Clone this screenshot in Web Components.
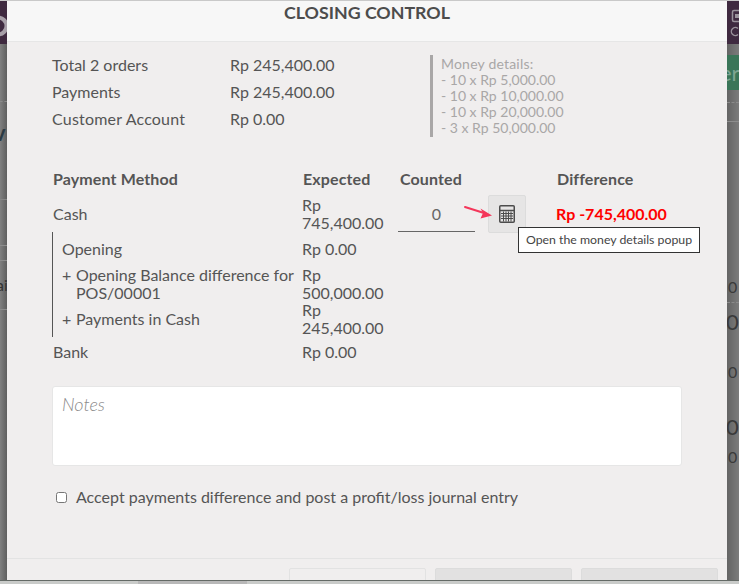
<!DOCTYPE html>
<html>
<head>
<meta charset="utf-8">
<title>Closing control</title>
<style>
    html, body { margin: 0; padding: 0; height: 584px; overflow: hidden; }
    body { font-family: "Lato", "Liberation Sans", sans-serif; font-size: 16px; color: #555; }
</style>
</head>
<body>
<pos-screen>
    <closing-modal title-text="CLOSING CONTROL">
        <div style="display:flex">
            <div>
                <summary-row amount="Rp 245,400.00">Total 2 orders</summary-row>
                <summary-row amount="Rp 245,400.00">Payments</summary-row>
                <summary-row amount="Rp 0.00"><span style="letter-spacing:.2px">Customer Account</span></summary-row>
            </div>
            <money-details>
                <div style="letter-spacing:.2px">Money details:</div>
                <div>- 10 x Rp 5,000.00</div>
                <div>- 10 x Rp 10,000.00</div>
                <div>- 10 x Rp 20,000.00</div>
                <div>- 3 x Rp 50,000.00</div>
            </money-details>
        </div>
        <payment-table>
            <payment-row kind="head" expected="Expected" counted="Counted" difference="Difference">Payment Method</payment-row>
            <payment-row expected="Rp 745,400.00" difference="Rp -745,400.00">Cash
                <counted-input slot="counted"></counted-input>
            </payment-row>
            <payment-group>
                <payment-row kind="sub" expected="Rp 0.00">Opening</payment-row>
                <payment-row kind="sub" sign="+" expected="Rp 500,000.00">Opening Balance difference for POS/00001</payment-row>
                <payment-row kind="sub" sign="+" expected="Rp 245,400.00" style="margin-top:-1px">Payments in Cash</payment-row>
            </payment-group>
            <payment-row kind="last" expected="Rp 0.00">Bank</payment-row>
        </payment-table>
        <notes-box placeholder="Notes"></notes-box>
        <accept-check>Accept payments difference and post a profit/loss journal entry</accept-check>
    </closing-modal>
</pos-screen>

<script>
class posScreen extends HTMLElement {
    constructor() {
        super();
        this.attachShadow({mode: "open"});
        this.shadowRoot.innerHTML = `
            <style>
                :host { display: flex; flex-direction: column; width: 739px; height: 584px; overflow: hidden; background: #737373; }
                .top { height: 1px; background: #c9c9c9; }
                .middle { display: flex; height: 579px; }
                .bottom { height: 4px; border-top: 1px solid #646a66; box-sizing: border-box; background: #c9cbc9; padding-left: 138px; }
                .bottom div { width: 109px; height: 3px; background: #b8b8b8; }
                .side { overflow: hidden; font-size: 16px; color: #2f2f2f; line-height: 18px; }
                .left { width: 7px; background: linear-gradient(to right, #808080, #5f5f5f); }
                .right { width: 12px; background: linear-gradient(to left, #7c7c7c, #646464); }
                .band { height: 43px; background: #3f2a40; }
                .band svg { display: block; }
                .dash { height: 0; border-top: 1px dashed #8b8b8b; }
                .line { height: 1px; background: #8d8d8d; }
                .clip { white-space: nowrap; }
                .green { height: 35px; background: #3a7558; color: #7fa592; font-size: 22px; line-height: 35px; margin-top: 11px; text-indent: -7px; white-space: nowrap; }
                .big { font-size: 22px; line-height: 24px; margin-left: -1px; color: #3a3a3a; }
                .small { margin-left: 1px; color: #3a3a3a; }
            </style>
            <div class="top"></div>
            <div class="middle">
                <div class="side left">
                    <div class="band">
                        <svg width="7" height="43"><circle cx="-2" cy="25" r="8.500" fill="none" stroke="#a79fa8" stroke-width="4"/></svg>
                    </div>
                    <div class="dash" style="margin-top:57px"></div>
                    <div class="clip" style="margin-top:20px;margin-left:-6px;font-size:22px;line-height:22px;font-weight:700;color:#2a3a44">v</div>
                    <div class="line" style="margin-top:55px;background:#868686"></div>
                    <div class="line" style="margin-top:45px"></div>
                    <div class="line" style="margin-top:14px"></div>
                    <div class="clip" style="margin-top:15px;margin-left:-4px;color:#333">ai</div>
                    <div class="line" style="margin-top:15px"></div>
                </div>
                <slot></slot>
                <div class="side right">
                    <div class="band">
                        <svg width="12" height="43">
                            <rect x="5.500" y="9.500" width="10" height="11" rx="1.500" fill="none" stroke="#9b939c" stroke-width="1.500"/>
                            <rect x="8" y="13" width="6" height="4" fill="#9b939c"/>
                            <path d="M11 27.500a4 4 0 1 0 0 6" fill="none" stroke="#9b939c" stroke-width="1.400"/>
                        </svg>
                    </div>
                    <div class="green">er</div>
                    <div class="dash" style="margin-top:12px"></div>
                    <div class="line" style="margin-top:18px"></div>
                    <div class="small" style="margin-top:156px">0</div>
                    <div class="dash" style="margin-top:6px"></div>
                    <div class="big" style="margin-top:7px">0</div>
                    <div class="small" style="margin-top:29px">0</div>
                    <div class="big" style="margin-top:34px">0</div>
                    <div class="small" style="margin-top:9px">0</div>
                </div>
            </div>
            <div class="bottom"><div></div></div>
        `
    }
}

class closingModal extends HTMLElement {
    constructor() {
        super();
        this.attachShadow({mode: "open"});
        this.shadowRoot.innerHTML = `
            <style>
                :host { display: flex; flex-direction: column; width: 720px; height: 579px; background: #f0eeee; overflow: hidden; }
                header {
                    height: 40px;
                    flex: none;
                    background: #f7f7f7;
                    border-bottom: 1px solid #e6e6e6;
                    text-align: center;
                    font-size: 17.800px;
                    font-weight: 700;
                    line-height: 22px;
                    color: #4c4c4c;
                }
                .body { flex: 1; padding: 9px 45px 0 45px; }
                footer {
                    flex: none;
                    border-top: 1px solid #e3e3e3;
                    display: flex;
                    justify-content: flex-end;
                    gap: 9px;
                    padding: 9px 9px 0 0;
                    height: 12px;
                }
                button {
                    width: 137px;
                    height: 56px;
                    flex: none;
                    box-sizing: border-box;
                    border: 1px solid #dcdcdc;
                    border-radius: 2px;
                    background: #e2e1e1;
                }
                button.plain { background: #f0eeee; border-color: #e2e2e2; }
            </style>
            <header>${this.getAttribute("title-text")}</header>
            <div class="body"><slot></slot></div>
            <footer>
                <button class="plain"></button>
                <button></button>
                <button></button>
            </footer>
        `
    }
}

class summaryRow extends HTMLElement {
    constructor() {
        super();
        this.attachShadow({mode: "open"});
        this.shadowRoot.innerHTML = `
            <style>
                :host { display: grid; grid-template-columns: 178px 200px; height: 27px; line-height: 27px; color: #555; }
            </style>
            <div><slot></slot></div>
            <div>${this.getAttribute("amount")}</div>
        `
    }
}

class moneyDetails extends HTMLElement {
    constructor() {
        super();
        this.attachShadow({mode: "open"});
        this.shadowRoot.innerHTML = `
            <style>
                :host {
                    display: block;
                    margin: 4px 0 0 0;
                    border-left: 3px solid #a9a7a7;
                    padding: 1px 0 1px 8px;
                    height: 80px;
                    line-height: 16px;
                    font-size: 14px;
                    color: #a9a7a7;
                }
            </style>
            <slot></slot>
        `
    }
}

class paymentTable extends HTMLElement {
    constructor() {
        super();
        this.attachShadow({mode: "open"});
        this.shadowRoot.innerHTML = `
            <style>
                :host { display: block; margin-top: 33px; }
            </style>
            <slot></slot>
        `
    }
}

class paymentGroup extends HTMLElement {
    constructor() {
        super();
        this.attachShadow({mode: "open"});
        this.shadowRoot.innerHTML = `
            <style>
                :host { display: block; border-left: 1px solid #555; }
            </style>
            <slot></slot>
        `
    }
}

class paymentRow extends HTMLElement {
    constructor() {
        super();
        this.attachShadow({mode: "open"});
        const kind = this.getAttribute("kind") || "";
        const sign = this.getAttribute("sign");
        const counted = this.getAttribute("counted");
        const difference = this.getAttribute("difference");
        this.shadowRoot.innerHTML = `
            <style>
                :host {
                    display: grid;
                    grid-template-columns: 250px 96px 159px 1fr;
                    align-items: center;
                    line-height: 18px;
                    min-height: 36px;
                    color: #555;
                }
                :host([kind="head"]) { min-height: 18px; padding-bottom: 8px; font-weight: 700; letter-spacing: .12px; }
                :host([kind="sub"]) { grid-template-columns: 249px 96px 159px 1fr; min-height: 34px; }
                :host([kind="last"]) { padding: 6px 0; min-height: 18px; }
                .label { display: flex; padding-left: ${kind == "sub" ? "9px" : "1px"}; }
                .sign { width: 14px; flex: none; }
                .diff { color: #f00; font-weight: 700; margin-left: -1px; }
                .count { padding-left: ${kind == "head" ? "2px" : "0"}; }
                .expected { padding-left: ${kind == "head" ? "1px" : "0"}; }
            </style>
            <div class="label">${sign ? `<span class="sign">${sign}</span>` : ""}<span><slot></slot></span></div>
            <div class="expected">${this.getAttribute("expected")}</div>
            <div class="count">${counted ? counted : ""}<slot name="counted"></slot></div>
            <div class="${kind == "head" ? "" : "diff"}">${difference ? difference : ""}</div>
        `
    }
}

class countedInput extends HTMLElement {
    constructor() {
        super();
        this.attachShadow({mode: "open"});
        this.shadowRoot.innerHTML = `
            <style>
                :host { display: flex; position: relative; align-items: flex-end; height: 36px; }
                .field {
                    width: 77px;
                    height: 36px;
                    box-sizing: border-box;
                    border-bottom: 1px solid #666;
                    text-align: center;
                    line-height: 36px;
                    color: #666;
                }
                button {
                    width: 38px;
                    height: 38px;
                    margin: 0 0 -1px 13px;
                    padding: 0;
                    flex: none;
                    box-sizing: border-box;
                    background: #e6e5e5;
                    border: 1px solid #dcdcdc;
                    border-radius: 2px;
                    display: flex;
                    align-items: center;
                    justify-content: center;
                }
                .arrow { position: absolute; left: 66px; top: 9px; }
                .tip {
                    position: absolute;
                    left: 120px;
                    top: 31px;
                    width: 182px;
                    height: 26px;
                    box-sizing: border-box;
                    background: #fff;
                    border: 1px solid #333;
                    font-size: 12.300px;
                    line-height: 24px;
                    text-align: center;
                    white-space: nowrap;
                    color: #444;
                }
            </style>
            <div class="field">0</div>
            <button aria-label="Open the money details popup">
                <svg width="16" height="18" viewBox="0 0 16 18">
                    <rect x=".75" y=".75" width="14.500" height="16.500" rx="1" fill="none" stroke="#4c4c4c" stroke-width="1.500"/>
                    <path d="M1 5.500h14" stroke="#4c4c4c" stroke-width="1.500"/>
                    <path d="M2 8.500h12M2 11h12M2 13.500h12M4.500 6.500v10M7 6.500v10M9.500 6.500v10M12 6.500v10" stroke="#4c4c4c" stroke-width="1"/>
                </svg>
            </button>
            <svg class="arrow" width="30" height="16" viewBox="0 0 30 16">
                <path d="M1 2L20 8" stroke="#f4365a" stroke-width="2" stroke-linecap="round"/>
                <path d="M28 10.500L16.500 13.500L19 8L16.500 3.500Z" fill="#f4365a"/>
            </svg>
            <div class="tip">Open the money details popup</div>
        `
    }
}

class notesBox extends HTMLElement {
    constructor() {
        super();
        this.attachShadow({mode: "open"});
        this.shadowRoot.innerHTML = `
            <style>
                :host { display: block; margin-top: 19px; }
                textarea {
                    display: block;
                    width: 630px;
                    height: 80px;
                    box-sizing: border-box;
                    resize: none;
                    background: #fff;
                    border: 1px solid #e6e6e6;
                    border-radius: 3px;
                    padding: 7px 9px;
                    font: italic 300 18px/20px "Lato", "Liberation Sans", sans-serif;
                    outline: none;
                }
                textarea::placeholder { color: #8a8a8a; opacity: 1; }
            </style>
            <textarea placeholder="${this.getAttribute("placeholder")}"></textarea>
        `
    }
}

class acceptCheck extends HTMLElement {
    constructor() {
        super();
        this.attachShadow({mode: "open"});
        this.shadowRoot.innerHTML = `
            <style>
                :host { display: flex; align-items: center; margin-top: 21px; height: 20px; line-height: 20px; color: #555; }
                input { width: 11px; height: 11px; margin: 0 9px 0 4px; flex: none; }
            </style>
            <input type="checkbox">
            <span><slot></slot></span>
        `
    }
}

customElements.define("pos-screen", posScreen);
customElements.define("closing-modal", closingModal);
customElements.define("summary-row", summaryRow);
customElements.define("money-details", moneyDetails);
customElements.define("payment-table", paymentTable);
customElements.define("payment-group", paymentGroup);
customElements.define("payment-row", paymentRow);
customElements.define("counted-input", countedInput);
customElements.define("notes-box", notesBox);
customElements.define("accept-check", acceptCheck);
</script>
</body>
</html>
